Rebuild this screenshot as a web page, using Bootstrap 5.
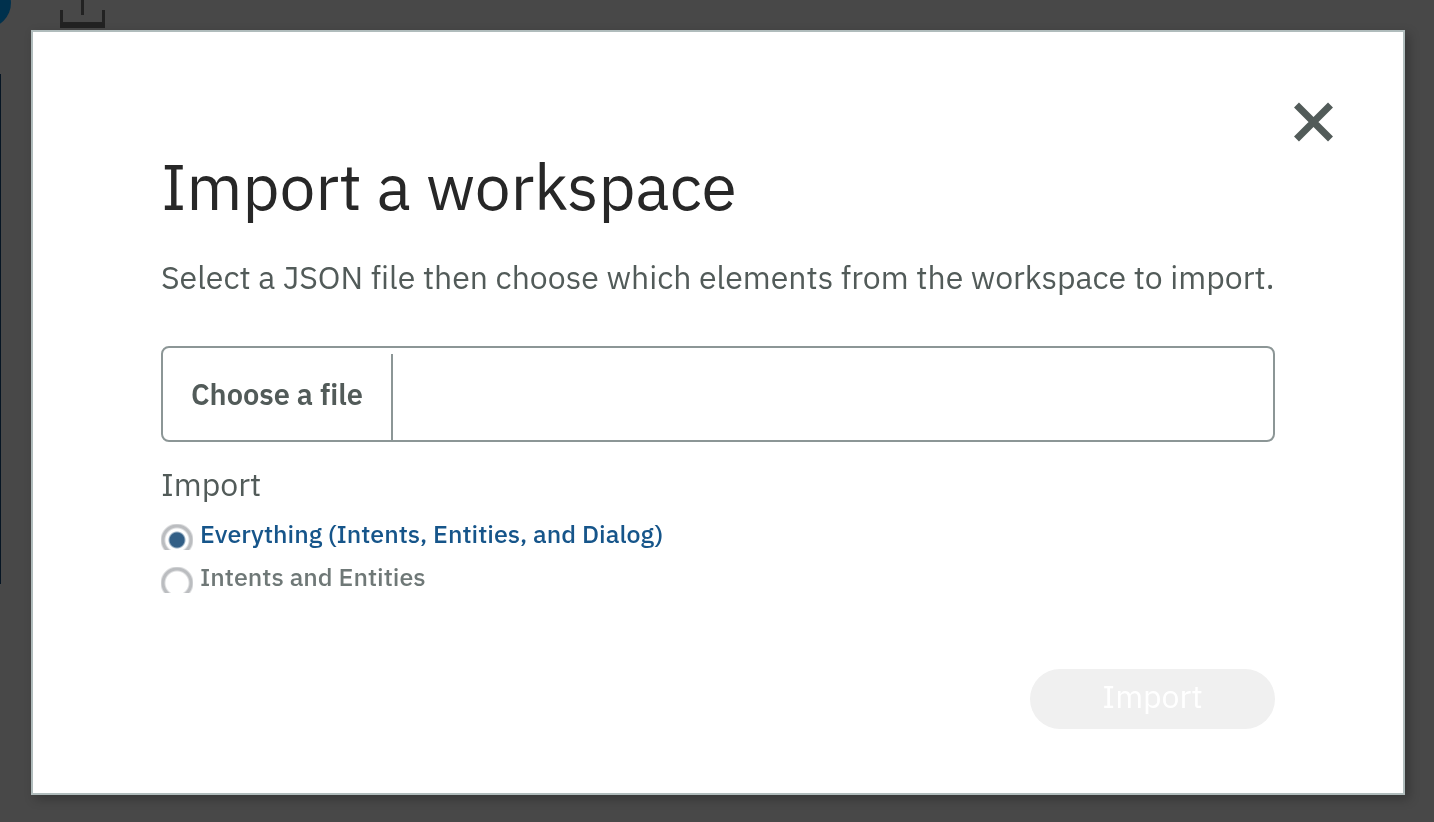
<!DOCTYPE html>
<html lang="en">
<head>
<meta charset="utf-8">
<meta name="viewport" content="width=device-width, initial-scale=1">
<title>Import a workspace</title>
<link href="https://cdn.jsdelivr.net/npm/bootstrap@5.3.0/dist/css/bootstrap.min.css" rel="stylesheet">
<style>
  body { background: #484848; font-family: "IBM Plex Sans", "Noto Sans", sans-serif; font-variant-ligatures: none; color: #525b59; overflow: hidden; }
  .page-tools { display: block; }
  .page-edge { width: 1px; height: 510px; margin-top: 44px; background: #061523; }
  .import-modal .modal-dialog { max-width: none; margin: 30px 29px 27px 31px; }
  .import-modal .modal-content { border: 2px solid #b0bcbc; border-radius: 0; padding: 116px 128px 64px; color: inherit; box-shadow: 4px 4px 10px rgba(0, 0, 0, .25); }
  .close-x { top: 70px; right: 70px; width: 40px; height: 40px; line-height: 0; color: #525b59; }
  .title-text { font-size: 64px; line-height: 76px; font-weight: 400; color: #272727; }
  .intro { font-size: 32px; line-height: 40px; margin: 33px 0 49px; }
  .file-field { height: 96px; border: 2px solid #8c9696; border-radius: 8px; cursor: pointer; }
  .file-pick { width: 230px; margin-top: 6px; padding-bottom: 4px; border-right: 2px solid #8c9696; font-size: 29px; font-weight: 600; }
  .group-box { padding-top: 22px; }
  .group-name { font-size: 32px; line-height: 40px; margin: 0 0 17px; }
  .choice { height: 43px; gap: 7px; font-size: 25px; line-height: 26px; font-weight: 500; color: #6f7877; }
  .choice input { appearance: none; flex: none; width: 32px; height: 26px; margin: 3px 0 0; background: radial-gradient(circle at 16px 16px, #fff 11px, #bbbdc0 13px, #bbbdc0 15px, transparent 17px); }
  .choice input:checked { background: radial-gradient(circle at 16px 16px, #325f86 7px, #fff 9px, #fff 11px, #bbbdc0 13px, #bbbdc0 15px, transparent 17px); }
  .choice input:checked + label { color: #16558a; }
  .send { width: 245px; height: 60px; margin-top: 62px; padding: 0 0 6px; border: 0; border-radius: 30px; font-size: 32px; line-height: 40px; }
  .send:disabled { background: #f0f0f0; color: #fff; opacity: 1; }
</style>
</head>
<body>
<main>
  <svg class="page-tools" width="110" height="30" viewBox="0 0 110 30" aria-hidden="true">
    <circle cx="-14" cy="3" r="25" fill="#00314d"/>
    <path d="M61.5 10V25.5H103.5V10M82.5 0V15" fill="none" stroke="#222" stroke-width="3"/>
    <path d="M60 22H105V28H60Z" fill="#222"/>
  </svg>
  <div class="page-edge"></div>
</main>

<div class="modal d-block import-modal" role="dialog" aria-modal="true" aria-labelledby="import-title">
  <div class="modal-dialog">
    <form class="modal-content">
      <button type="button" class="btn p-0 border-0 position-absolute close-x" aria-label="Close">
        <svg width="40" height="40" viewBox="0 0 40 40"><path d="M3.500 3L37.500 37M37.500 3L3.500 37" stroke="currentColor" stroke-width="7"/></svg>
      </button>
      <h1 class="title-text m-0" id="import-title">Import a workspace</h1>
      <p class="intro text-nowrap">Select a JSON file then choose which elements from the workspace to import.</p>

      <input type="file" id="workspace-file" class="visually-hidden" accept=".json">
      <label for="workspace-file" class="file-field d-flex">
        <span class="file-pick d-flex align-items-center justify-content-center">Choose a file</span>
      </label>

      <fieldset class="group-box">
        <legend class="group-name">Import</legend>
        <div class="choice d-flex align-items-start">
          <input type="radio" name="scope" id="scope-all" checked>
          <label for="scope-all">Everything (Intents, Entities, and Dialog)</label>
        </div>
        <div class="choice d-flex align-items-start">
          <input type="radio" name="scope" id="scope-part">
          <label for="scope-part">Intents and Entities</label>
        </div>
      </fieldset>

      <button type="submit" class="btn send align-self-end" disabled>Import</button>
    </form>
  </div>
</div>
<script src="https://cdn.jsdelivr.net/npm/bootstrap@5.3.0/dist/js/bootstrap.bundle.min.js"></script>
</body>
</html>
